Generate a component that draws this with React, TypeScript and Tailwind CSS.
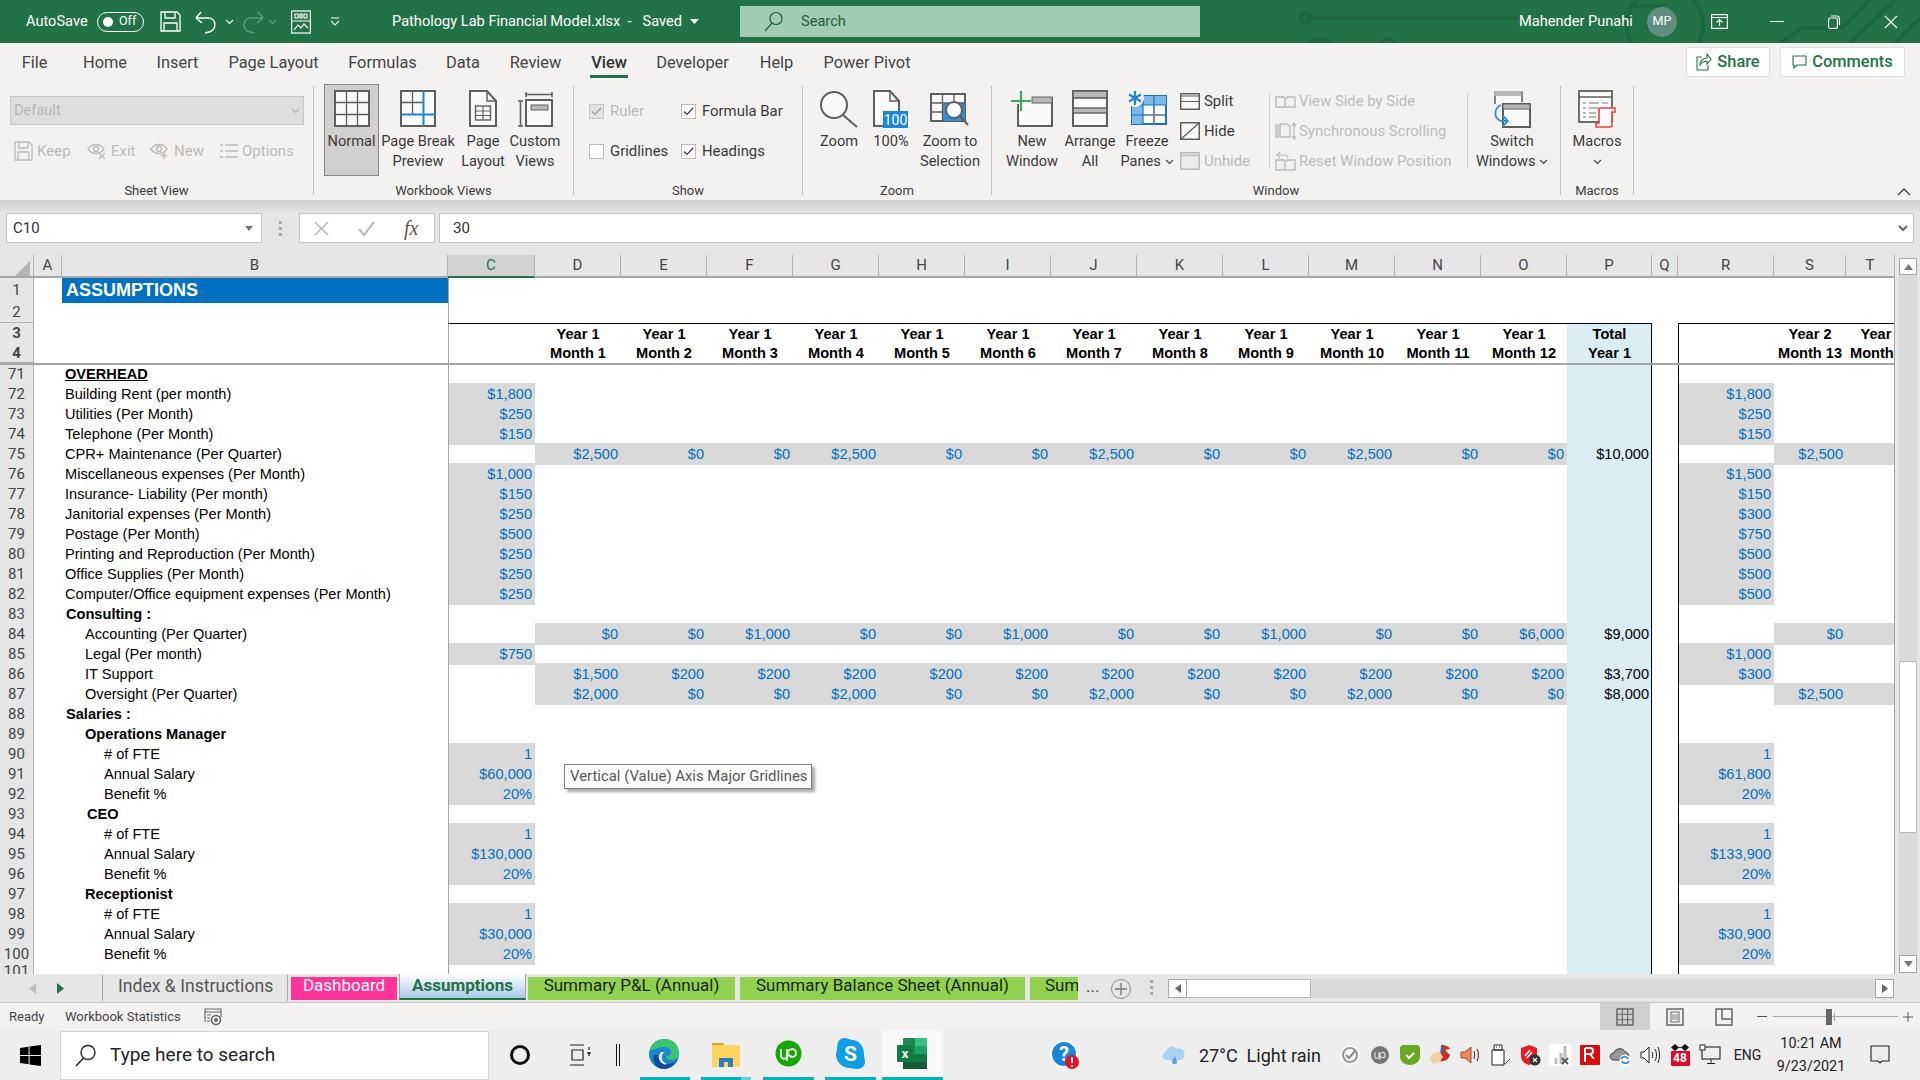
import React from "react";

const ui = "font-['Roboto',sans-serif]";
const cellFont = "font-['Liberation_Sans',Arial,sans-serif]";

/* ---------- small icons ---------- */
const S = "#5e5e5e";
const BIcon = ({ w = 38, h = 38, children }: { w?: number; h?: number; children: React.ReactNode }) => (
  <svg width={w} height={h} viewBox={`0 0 ${w} ${h}`} className="shrink-0">{children}</svg>
);
const NormalI = () => (
  <BIcon w={36} h={38}>
    <rect x="1" y="1" width="34" height="35" fill="#fafafa" stroke={S} strokeWidth="2" />
    <path d="M12.5 1v35M23.5 1v35M1 12.5h34M1 24.5h34" stroke={S} strokeWidth="1.3" fill="none" />
  </BIcon>
);
const PageBreakI = () => (
  <BIcon w={36} h={38}>
    <rect x="1" y="1" width="34" height="35" fill="#fafafa" stroke={S} strokeWidth="2" />
    <path d="M12.5 1v24M1 12.5h23" stroke={S} strokeWidth="1.3" fill="none" />
    <path d="M23.5 1v35M1 24.5h34" stroke="#1a86d6" strokeWidth="2" fill="none" />
  </BIcon>
);
const PageLayoutI = () => (
  <BIcon w={28} h={38}>
    <path d="M1 1h17l9 10v25H1z" fill="#fafafa" stroke={S} strokeWidth="2" />
    <path d="M18 1v10h9" fill="none" stroke={S} strokeWidth="1.5" />
    <rect x="6.5" y="16" width="15" height="14" fill="none" stroke={S} strokeWidth="1.4" />
    <path d="M14 16v14M6.5 21h15M6.5 25.5h15" stroke={S} strokeWidth="1.1" />
  </BIcon>
);
const CustomI = () => (
  <BIcon w={38} h={38}>
    <path d="M2 11h5M4.5 11v25M2 36h5" stroke={S} strokeWidth="1.6" fill="none" />
    <path d="M10 2v5M10 4.5h26M36 2v5" stroke={S} strokeWidth="1.6" fill="none" />
    <rect x="10" y="10" width="26" height="26" fill="#fafafa" stroke={S} strokeWidth="2" />
    <rect x="15" y="15" width="17" height="5" fill="#b8b8b8" stroke={S} strokeWidth="1" />
  </BIcon>
);
const ZoomI = () => (
  <BIcon w={40} h={38}>
    <circle cx="15" cy="15" r="13" fill="#fafafa" stroke={S} strokeWidth="2" />
    <path d="M24 25l14 12" stroke={S} strokeWidth="2" />
  </BIcon>
);
const HundredI = () => (
  <BIcon w={36} h={39}>
    <path d="M1 1h16l9 10v25H1z" fill="#fafafa" stroke={S} strokeWidth="2" />
    <path d="M17 1v10h9" fill="none" stroke={S} strokeWidth="1.5" />
    <rect x="10" y="21" width="25" height="17" fill="#1a86d6" />
    <text x="22.5" y="35" textAnchor="middle" fontSize="14" fill="#fff" fontFamily="Roboto">100</text>
  </BIcon>
);
const ZoomSelI = () => (
  <BIcon w={40} h={38}>
    <rect x="1" y="4" width="34" height="27" fill="#fafafa" stroke={S} strokeWidth="2" />
    <rect x="13" y="13" width="22" height="18" fill="#2f8ed8" />
    <path d="M12.5 4v27M24 4v9M1 13h34M1 22h12" stroke={S} strokeWidth="1.3" fill="none" />
    <circle cx="24" cy="20" r="8" fill="#fff" stroke={S} strokeWidth="2" />
    <path d="M30 26l8 9" stroke={S} strokeWidth="2" />
  </BIcon>
);
const NewWinI = () => (
  <BIcon w={44} h={38}>
    <path d="M8 14v22h34V8H22" fill="#fafafa" stroke={S} strokeWidth="2" />
    <rect x="22" y="7" width="20" height="6" fill="#b8b8b8" stroke={S} strokeWidth="1" />
    <path d="M11 1v20M1 11h20" stroke="#3fa266" strokeWidth="2.2" />
  </BIcon>
);
const ArrangeI = () => (
  <BIcon w={36} h={38}>
    <rect x="1" y="1" width="34" height="35" fill="#fafafa" stroke={S} strokeWidth="2" />
    <rect x="1" y="1" width="34" height="7" fill="#b8b8b8" stroke={S} strokeWidth="1.6" />
    <rect x="1" y="18" width="34" height="5" fill="#b8b8b8" stroke={S} strokeWidth="1.4" />
  </BIcon>
);
const FreezeI = () => (
  <BIcon w={40} h={38}>
    <rect x="5" y="6" width="34" height="28" fill="#fafafa" stroke="#1e71b8" strokeWidth="2" />
    <rect x="5" y="6" width="34" height="9" fill="#7db9e8" />
    <rect x="5" y="6" width="11" height="28" fill="#7db9e8" />
    <path d="M16 6v28M27 6v28M5 15h34M5 25h34" stroke="#1e71b8" strokeWidth="1.2" />
    <path d="M27 15v19M16 25h23" stroke="#777" strokeWidth="1" />
    <circle cx="8" cy="8" r="9" fill="#f3f2f1" />
    <path d="M8 1v14M2 4.5l12 7M14 4.5l-12 7" stroke="#1a86d6" strokeWidth="2.2" />
  </BIcon>
);
const SplitI = () => (
  <BIcon w={20} h={17}>
    <rect x=".75" y=".75" width="18.5" height="15.5" fill="#fafafa" stroke={S} strokeWidth="1.5" />
    <path d="M1 3h18M1 8.5h18" stroke={S} strokeWidth="1.2" />
  </BIcon>
);
const HideI = () => (
  <BIcon w={20} h={18}>
    <rect x=".75" y=".75" width="18.5" height="16.5" fill="#fafafa" stroke={S} strokeWidth="1.5" />
    <path d="M1 17L19 1" stroke={S} strokeWidth="1.3" />
  </BIcon>
);
const UnhideI = () => (
  <BIcon w={20} h={18}>
    <rect x=".75" y=".75" width="18.5" height="16.5" fill="#ecebea" stroke="#bdbbb8" strokeWidth="1.5" />
    <path d="M1 3.5h18" stroke="#bdbbb8" strokeWidth="1.4" />
  </BIcon>
);
const D = "#bdbbb8";
const SideI = () => (
  <BIcon w={21} h={14}>
    <path d="M1 3h8l1 2v8H1zM11 5l1-2h8v10h-10" fill="none" stroke={D} strokeWidth="1.4" />
  </BIcon>
);
const SyncI = () => (
  <BIcon w={22} h={18}>
    <path d="M1 3h2v12H1zM5 2h7l3 3v10H5z" fill="none" stroke={D} strokeWidth="1.4" />
    <path d="M19 1v16M17 4l2-3 2 3M17 14l2 3 2-3" fill="none" stroke={D} strokeWidth="1.2" />
  </BIcon>
);
const ResetI = () => (
  <BIcon w={21} h={20}>
    <path d="M1 9h8l1 2v8H1zM11 11l1-2h8v10h-10" fill="none" stroke={D} strokeWidth="1.4" />
    <path d="M5 1L2 4l3 3M2 4h8c2 0 3 1 3 3" fill="none" stroke={D} strokeWidth="1.2" />
  </BIcon>
);
const SwitchI = () => (
  <BIcon w={38} h={38}>
    <path d="M2 14V2h27v10" fill="#fafafa" stroke={S} strokeWidth="1.5" />
    <rect x="1.5" y="1" width="27" height="5" fill="#b8b8b8" />
    <rect x="10" y="14" width="27" height="23" fill="#fafafa" stroke={S} strokeWidth="2" />
    <rect x="10" y="14" width="27" height="5" fill="#b8b8b8" stroke={S} strokeWidth="1" />
    <path d="M8 15c-7 3-8 13 0 16h6M10 26l5 5-5 5" fill="none" stroke="#2f8ed8" strokeWidth="1.8" />
  </BIcon>
);
const MacrosI = () => (
  <BIcon w={38} h={38}>
    <rect x="1" y="1" width="33" height="31" fill="#fafafa" stroke={S} strokeWidth="1.8" />
    <path d="M1 7h33" stroke={S} strokeWidth="1.4" />
    <path d="M5 13h3M11 13h10M24 13h6M5 18h3M11 18h10M5 23h3M11 23h7M5 27h3M11 27h7" stroke="#777" strokeWidth="1.2" />
    <path d="M22 18h15v4h-3v13c0 2-1 2-2 2H18v-4h3V19z" fill="#fafafa" stroke="#e8403f" strokeWidth="1.6" />
  </BIcon>
);

const Chev = ({ c = "#444" }: { c?: string }) => (
  <svg width="9" height="6" viewBox="0 0 9 6" className="inline-block"><path d="M1 1l3.5 3.5L8 1" fill="none" stroke={c} strokeWidth="1.2" /></svg>
);

const Big = ({ w, icon, lines, active }: { w: string; icon: React.ReactNode; lines: React.ReactNode[]; active?: boolean }) => (
  <div className={`${w} shrink-0 flex flex-col items-center ${active ? "pt-[5px] bg-[#d2d0ce] border border-[#8a8886] h-[92px] -mt-[2px]" : "pt-[4px]"}`}>
    <div className="h-[41px] flex items-start justify-center">{icon}</div>
    {lines.map((l, i) => (
      <div key={i} className="h-[20px] leading-[20px] text-[14.6px] text-[#3b3a39] whitespace-nowrap">{l}</div>
    ))}
  </div>
);

const Sep = ({ h = "h-[109px]" }: { h?: string }) => <div className={`w-px ${h} bg-[#c4c3c1] shrink-0`} />;

const Group = ({ w, label, children }: { w: string; label: string; children: React.ReactNode }) => (
  <div className={`${w} shrink-0 h-[114px] flex flex-col`}>
    <div className="flex-1 flex min-h-0">{children}</div>
    <div className="h-[20px] leading-[21px] text-center text-[13px] text-[#3b3a39]">{label}</div>
  </div>
);

const Check = ({ on, dis }: { on?: boolean; dis?: boolean }) => (
  <span className={`w-[15px] h-[15px] border flex items-center justify-center shrink-0 ${dis ? "border-[#c8c6c4] bg-[#e3e2e0]" : "border-[#bdbbb8] bg-white"}`}>
    {on && <svg width="11" height="9" viewBox="0 0 11 9"><path d="M1 4.5L4 7.5 10 1" fill="none" stroke={dis ? "#a19f9d" : "#333"} strokeWidth="1.2" /></svg>}
  </span>
);

const Disabled = ({ w, icon, t }: { w: string; icon: React.ReactNode; t: string }) => (
  <div className={`flex items-center gap-[4px] shrink-0 ${w}`}>
    {icon}
    <span className="text-[15px] text-[#bdbbb8]">{t}</span>
  </div>
);

const Eye = ({ x }: { x?: boolean }) => (
  <svg width="20" height="18" viewBox="0 0 20 18">
    <path d="M1 7c4-6 12-6 16 0-4 6-12 6-16 0z" fill="none" stroke={D} strokeWidth="1.4" />
    <circle cx="9" cy="7" r="2.5" fill="none" stroke={D} strokeWidth="1.3" />
    {x ? <path d="M12 11l6 6M18 11l-6 6" stroke={D} strokeWidth="1.3" /> : <path d="M14 10v7M11 13.5h6" stroke={D} strokeWidth="1.3" />}
  </svg>
);

const TabItem = ({ t, ml, on }: { t: string; ml: string; on?: boolean }) => (
  <div className={`${ml} shrink-0 h-[37px] flex flex-col items-center`}>
    <div className={`h-[32px] leading-[39px] text-[16.4px] whitespace-nowrap ${on ? "font-medium text-[#323130]" : "text-[#444]"}`}>{t}</div>
    {on && <div className="w-full h-[3px] bg-[#217346]" />}
  </div>
);

/* ---------- sheet data ---------- */
const gridCols = "grid grid-cols-[34px_28px_386px_87px_repeat(12,86px)_85px_26px_96px_72px_49px]";
const headerLetters = ["A", "B", "C", "D", "E", "F", "G", "H", "I", "J", "K", "L", "M", "N", "O", "P", "Q", "R", "S", "T"];

type R = {
  n: number; label?: string; bold?: boolean; under?: boolean; ind?: string;
  c?: string; m?: string[]; p?: string; r?: string; s?: string; sFill?: boolean;
};
const q = (a: string, b: string, c: string, last = "$0") => [a, b, c, a, b, c, a, b, c, a, b, last];

const rows: R[] = [
  { n: 71, label: "OVERHEAD", bold: true, under: true },
  { n: 72, label: "Building Rent (per month)", c: "$1,800", r: "$1,800" },
  { n: 73, label: "Utilities (Per Month)", c: "$250", r: "$250" },
  { n: 74, label: "Telephone (Per Month)", c: "$150", r: "$150" },
  { n: 75, label: "CPR+ Maintenance (Per Quarter)", m: q("$2,500", "$0", "$0"), p: "$10,000", s: "$2,500", sFill: true },
  { n: 76, label: "Miscellaneous expenses (Per Month)", c: "$1,000", r: "$1,500" },
  { n: 77, label: "Insurance- Liability (Per month)", c: "$150", r: "$150" },
  { n: 78, label: "Janitorial expenses (Per Month)", c: "$250", r: "$300" },
  { n: 79, label: "Postage (Per Month)", c: "$500", r: "$750" },
  { n: 80, label: "Printing and Reproduction (Per Month)", c: "$250", r: "$500" },
  { n: 81, label: "Office Supplies (Per Month)", c: "$250", r: "$500" },
  { n: 82, label: "Computer/Office equipment expenses (Per Month)", c: "$250", r: "$500" },
  { n: 83, label: "Consulting :", bold: true, ind: "pl-[4px]" },
  { n: 84, label: "Accounting (Per Quarter)", ind: "pl-[23px]", m: q("$0", "$0", "$1,000", "$6,000"), p: "$9,000", s: "$0", sFill: true },
  { n: 85, label: "Legal (Per month)", ind: "pl-[23px]", c: "$750", r: "$1,000" },
  { n: 86, label: "IT Support", ind: "pl-[23px]", m: ["$1,500", "$200", "$200", "$200", "$200", "$200", "$200", "$200", "$200", "$200", "$200", "$200"], p: "$3,700", r: "$300" },
  { n: 87, label: "Oversight (Per Quarter)", ind: "pl-[23px]", m: q("$2,000", "$0", "$0"), p: "$8,000", s: "$2,500", sFill: true },
  { n: 88, label: "Salaries :", bold: true, ind: "pl-[4px]" },
  { n: 89, label: "Operations Manager", bold: true, ind: "pl-[23px]" },
  { n: 90, label: "# of FTE", ind: "pl-[42px]", c: "1", r: "1" },
  { n: 91, label: "Annual Salary", ind: "pl-[42px]", c: "$60,000", r: "$61,800" },
  { n: 92, label: "Benefit %", ind: "pl-[42px]", c: "20%", r: "20%" },
  { n: 93, label: "CEO", bold: true, ind: "pl-[25px]" },
  { n: 94, label: "# of FTE", ind: "pl-[42px]", c: "1", r: "1" },
  { n: 95, label: "Annual Salary", ind: "pl-[42px]", c: "$130,000", r: "$133,900" },
  { n: 96, label: "Benefit %", ind: "pl-[42px]", c: "20%", r: "20%" },
  { n: 97, label: "Receptionist", bold: true, ind: "pl-[23px]" },
  { n: 98, label: "# of FTE", ind: "pl-[42px]", c: "1", r: "1" },
  { n: 99, label: "Annual Salary", ind: "pl-[42px]", c: "$30,000", r: "$30,900" },
  { n: 100, label: "Benefit %", ind: "pl-[42px]", c: "20%", r: "20%" },
  { n: 101 },
];

const RowHead = ({ n }: { n: number }) => (
  <div className={`${ui} bg-[#e6e6e6] border-r border-b border-[#b1b1b1] flex justify-center text-[15px] text-[#444] leading-none pt-[1px] ${n === 101 ? "items-start" : "items-center"}`}>{n}</div>
);
const num = "text-right pr-[3px] text-[#0070c0] h-full";

const DataRow = ({ r }: { r: R }) => (
  <div className={`${gridCols} ${r.n === 101 ? "h-[11px] overflow-hidden" : "h-[20px]"} ${r.n === 71 ? "border-t-2 border-[#a6a6a6] leading-[19px]" : "leading-[22px]"} ${cellFont} text-[14.6px] text-black`}>
    <RowHead n={r.n} />
    <div />
    <div className={`whitespace-nowrap pl-[3px] ${r.ind ?? ""} ${r.bold ? "font-bold" : ""} ${r.under ? "underline" : ""}`}>{r.label}</div>
    <div className={`border-l border-[#a6a6a6] ${num} ${r.c ? "bg-[#d9d9d9]" : ""}`}>{r.c}</div>
    {Array.from({ length: 12 }).map((_, i) => (
      <div key={i} className={`${num} ${r.m ? "bg-[#d9d9d9]" : ""}`}>{r.m?.[i]}</div>
    ))}
    <div className="bg-[#daedf3] border-r border-black text-right pr-[2px]">{r.p}</div>
    <div />
    <div className={`border-l border-black ${num} ${r.r ? "bg-[#d9d9d9]" : ""}`}>{r.r}</div>
    <div className={`${num} ${r.sFill ? "bg-[#d9d9d9]" : ""}`}>{r.s}</div>
    <div className={r.sFill ? "bg-[#d9d9d9]" : ""} />
  </div>
);

const HeadRow = ({ n, top }: { n: number; top?: boolean }) => {
  const yr = top;
  const bt = top ? "border-t border-t-black" : "";
  return (
    <div className={`${gridCols} h-[20px] ${cellFont} text-[14.6px] leading-[20px] font-bold text-black`}>
      <RowHead n={n} />
      <div />
      <div />
      <div className={`border-l border-l-[#a6a6a6] ${bt}`} />
      {Array.from({ length: 12 }).map((_, i) => (
        <div key={i} className={`text-center whitespace-nowrap ${bt}`}>{yr ? "Year 1" : `Month ${i + 1}`}</div>
      ))}
      <div className={`bg-[#daedf3] border-r border-r-black text-center pl-[1px] ${bt}`}>{yr ? "Total" : "Year 1"}</div>
      <div />
      <div className={`border-l border-l-black ${bt}`} />
      <div className={`text-center whitespace-nowrap ${bt}`}>{yr ? "Year 2" : "Month 13"}</div>
      <div className={`overflow-hidden ${bt}`}><div className="w-[72px] text-center whitespace-nowrap">{yr ? "Year 2" : "Month 14"}</div></div>
    </div>
  );
};

/* ---------- tray & taskbar icons ---------- */
const Tray = ({ children }: { children: React.ReactNode }) => <div className="w-[30px] h-[50px] flex items-center justify-center shrink-0">{children}</div>;
const Ic = ({ children, s = 22 }: { children: React.ReactNode; s?: number }) => <svg width={s} height={s} viewBox="0 0 22 22">{children}</svg>;

const TaskApp = ({ w, ml, bg, children, light }: { w: string; ml: string; bg?: string; children: React.ReactNode; light?: boolean }) => (
  <div className={`${w} ${ml} ${bg ?? ""} h-[50px] flex flex-col shrink-0`}>
    <div className="flex-1 flex items-center justify-center">{children}</div>
    <div className="h-[3px] bg-[#00b1c4] flex justify-end">{light && <div className="w-[10px] h-[3px] bg-[#66d0dc]" />}</div>
  </div>
);

export default function App() {
  return (
    <div className={`${ui} w-[1920px] h-[1080px] overflow-hidden bg-[#e6e6e6] flex flex-col`}>
      {/* Title bar */}
      <div className="relative h-[43px] shrink-0 bg-[#217346] flex items-center text-white overflow-hidden">
        <svg className="absolute left-0 top-0" width="1920" height="43" viewBox="0 0 1920 43" fill="none" stroke="#1d663e" strokeWidth="4">
          <path d="M1306 18h214" /><circle cx="1306" cy="18" r="5" />
          <circle cx="1320" cy="60" r="20" /><circle cx="1388" cy="45" r="6" /><path d="M1394 45h70" />
          <circle cx="1665" cy="25" r="38" /><path d="M1634 6h28l-16 22" />
          <path d="M1780 43l22-15h40l28-28M1850 43l45-43M1895 43l25-25" />
        </svg>
        <span className="relative ml-[26px] text-[14.6px] w-[62px]">AutoSave</span>
        <div className="relative ml-[9px] w-[47px] h-[20px] rounded-full border border-white flex items-center">
          <span className="ml-[5px] w-[10px] h-[10px] rounded-full bg-white" />
          <span className="ml-[6px] text-[12.5px] leading-none">Off</span>
        </div>
        <svg className="relative ml-[16px]" width="21" height="21" viewBox="0 0 21 21" fill="none" stroke="#fff" strokeWidth="1.3">
          <path d="M1 1h16l3 3v16H1zM5 1v6h10V1M4 20v-8h13v8" />
        </svg>
        <svg className="relative ml-[14px]" width="21" height="24" viewBox="0 0 21 24" fill="none" stroke="#fff" strokeWidth="1.5">
          <path d="M1 8h12c9 0 9 12 1 14l-4 1M1 8l5-6M1 8l6 5" />
        </svg>
        <span className="relative ml-[9px] flex"><Chev c="#fff" /></span>
        <svg className="relative ml-[9px]" width="21" height="24" viewBox="0 0 21 24" fill="none" stroke="#5f9c7b" strokeWidth="1.5">
          <path d="M20 8H8C-1 8-1 20 7 22l4 1M20 8l-5-6M20 8l-6 5" />
        </svg>
        <span className="relative ml-[4px] flex"><Chev c="#5f9c7b" /></span>
        <svg className="relative ml-[14px]" width="20" height="24" viewBox="0 0 20 24" fill="none" stroke="#fff" strokeWidth="1.2">
          <rect x=".6" y="1" width="18.8" height="22" /><path d="M1 11h18M4 4h3v4H4zM9 4h2v4H9zM13 4h3v4h-3zM3 20l4-5 3 3 3-4 4 4" />
        </svg>
        <svg className="relative ml-[19px]" width="10" height="10" viewBox="0 0 10 10" fill="none" stroke="#fff" strokeWidth="1.1"><path d="M1 1h8M1 4l4 4 4-4" /></svg>
        <span className="relative ml-[52px] text-[14.6px] w-[296px] whitespace-nowrap">Pathology Lab Financial Model.xlsx&nbsp;&nbsp;-&nbsp;&nbsp;&nbsp;Saved</span>
        <svg className="relative ml-[2px]" width="9" height="5" viewBox="0 0 9 5"><path d="M0 0h9L4.5 5z" fill="#fff" /></svg>
        <div className="relative ml-[41px] w-[460px] h-[31px] bg-[#a0ccb4] flex items-center text-[#1b5f3b]">
          <svg className="ml-[24px]" width="19" height="21" viewBox="0 0 19 21" fill="none" stroke="#1b5f3b" strokeWidth="1.2"><circle cx="12" cy="7.5" r="6" /><path d="M8 12L1 20" /></svg>
          <span className="ml-[18px] text-[14.6px]">Search</span>
        </div>
        <span className="relative ml-[319px] text-[14.6px] w-[115px] whitespace-nowrap">Mahender Punahi</span>
        <div className="relative ml-[13px] w-[30px] h-[30px] rounded-full bg-[#5f8e80] flex items-center justify-center text-[12.5px]">MP</div>
        <svg className="relative ml-[34px]" width="17" height="15" viewBox="0 0 17 15" fill="none" stroke="#fff" strokeWidth="1.2"><rect x=".6" y=".6" width="15.8" height="13.8" /><path d="M1 3.5h15M8.5 12V6M5.5 8.5l3-3 3 3" /></svg>
        <div className="relative ml-[42px] w-[14px] h-px bg-white" />
        <svg className="relative ml-[44px]" width="12" height="14" viewBox="0 0 12 14" fill="none" stroke="#fff" strokeWidth="1.1"><rect x=".6" y="3" width="8.8" height="10.4" rx="1.5" /><path d="M3 1h6c1.5 0 2.4 1 2.4 2.4V10" /></svg>
        <svg className="relative ml-[44px]" width="14" height="14" viewBox="0 0 14 14" stroke="#fff" strokeWidth="1.2"><path d="M1 1l12 12M13 1L1 13" /></svg>
      </div>

      {/* Ribbon */}
      <div className="h-[157px] shrink-0 bg-[#f3f2f1] flex flex-col">
        <div className="h-[37px] flex relative">
          <TabItem t="File" ml="ml-[21px] w-[27px]" />
          <TabItem t="Home" ml="ml-[34px] w-[46px]" />
          <TabItem t="Insert" ml="ml-[28px] w-[43px]" />
          <TabItem t="Page Layout" ml="ml-[28px] w-[93px]" />
          <TabItem t="Formulas" ml="ml-[28px] w-[69px]" />
          <TabItem t="Data" ml="ml-[28px] w-[36px]" />
          <TabItem t="Review" ml="ml-[28px] w-[53px]" />
          <TabItem t="View" ml="ml-[28px] w-[38px]" on />
          <TabItem t="Developer" ml="ml-[26px] w-[77px]" />
          <TabItem t="Help" ml="ml-[28px] w-[35px]" />
          <TabItem t="Power Pivot" ml="ml-[29px] w-[88px]" />
          <div className="ml-[775px] mt-[4px] w-[84px] h-[30px] bg-white border border-[#e1dfdd] rounded-[2px] flex items-center justify-center gap-[5px] text-[#217346] font-medium text-[16.4px]">
            <svg width="16" height="18" viewBox="0 0 16 18" fill="none" stroke="#217346" strokeWidth="1.1"><path d="M6 4H1v13h11v-5M4 12c0-4 3-7 7-7V1l4 5.5L11 11V8c-3 0-5 1-7 4z" /></svg>
            Share
          </div>
          <div className="ml-[10px] mt-[4px] w-[125px] h-[30px] bg-white border border-[#e1dfdd] rounded-[2px] flex items-center justify-center gap-[5px] text-[#217346] font-medium text-[16.4px]">
            <svg width="15" height="15" viewBox="0 0 15 15" fill="none" stroke="#217346" strokeWidth="1.1"><path d="M1 1h13v9H5l-3 3v-3H1z" /></svg>
            Comments
          </div>
        </div>
        <div className="flex-1 flex items-start pt-[6px] relative">
          <Group w="w-[313px]" label="Sheet View">
            <div className="flex flex-col">
              <div className="ml-[10px] mt-[10px] w-[294px] h-[29px] bg-[#dfdedd] border border-[#c8c6c4] flex items-center justify-between px-[3px] text-[14.6px] text-[#b8b6b4]">
                Default <Chev c="#b8b6b4" />
              </div>
              <div className="flex items-center h-[24px] mt-[14px] pl-[14px]">
                <Disabled w="w-[73px]" t="Keep" icon={<svg width="19" height="20" viewBox="0 0 19 20" fill="none" stroke={D} strokeWidth="1.3"><path d="M1 1h14l3 3v15H1zM5 1v6h9V1M4 19v-8h11v8" /></svg>} />
                <Disabled w="w-[63px]" t="Exit" icon={<Eye x />} />
                <Disabled w="w-[69px]" t="New" icon={<Eye />} />
                <Disabled w="w-[80px]" t="Options" icon={<svg width="19" height="16" viewBox="0 0 19 16" stroke={D} strokeWidth="1.4"><path d="M1 2h3M6 2h13M1 8h3M6 8h13M1 14h3M6 14h13" /></svg>} />
              </div>
            </div>
          </Group>
          <Sep />
          <Group w="w-[259px]" label="Workbook Views">
            <div className="flex pl-[10px] pt-[0px]">
              <Big w="w-[55px]" active icon={<NormalI />} lines={["Normal"]} />
              <Big w="w-[78px]" icon={<PageBreakI />} lines={["Page Break", "Preview"]} />
              <Big w="w-[52px]" icon={<PageLayoutI />} lines={["Page", "Layout"]} />
              <Big w="w-[52px]" icon={<CustomI />} lines={["Custom", "Views"]} />
            </div>
          </Group>
          <Sep />
          <Group w="w-[228px]" label="Show">
            <div className="grid grid-cols-[92px_120px] grid-rows-[40px_40px] pl-[15px] pt-[5px] text-[14.9px] text-[#3b3a39]">
              <div className="flex items-center gap-[6px] text-[#bdbbb8]"><Check on dis />Ruler</div>
              <div className="flex items-center gap-[6px]"><Check on />Formula Bar</div>
              <div className="flex items-center gap-[6px]"><Check />Gridlines</div>
              <div className="flex items-center gap-[6px]"><Check on />Headings</div>
            </div>
          </Group>
          <Sep />
          <Group w="w-[188px]" label="Zoom">
            <div className="flex pl-[8px]">
              <Big w="w-[56px]" icon={<ZoomI />} lines={["Zoom"]} />
              <Big w="w-[48px]" icon={<HundredI />} lines={["100%"]} />
              <Big w="w-[70px]" icon={<ZoomSelI />} lines={["Zoom to", "Selection"]} />
            </div>
          </Group>
          <Sep />
          <Group w="w-[568px]" label="Window">
            <div className="flex pl-[10px]">
              <Big w="w-[60px]" icon={<NewWinI />} lines={["New", "Window"]} />
              <Big w="w-[56px]" icon={<ArrangeI />} lines={["Arrange", "All"]} />
              <Big w="w-[58px]" icon={<FreezeI />} lines={["Freeze", <>Panes <Chev /></>]} />
              <div className="w-[89px] ml-[4px] flex flex-col text-[14.9px] text-[#3b3a39]">
                <div className="h-[30px] flex items-center gap-[4px]"><SplitI />Split</div>
                <div className="h-[30px] flex items-center gap-[4px]"><HideI />Hide</div>
                <div className="h-[30px] flex items-center gap-[4px] text-[#bdbbb8]"><UnhideI />Unhide</div>
              </div>
              <div className="w-px h-[75px] mt-[7px] bg-[#d2d0ce]" />
              <div className="w-[197px] pl-[5px] flex flex-col text-[14.9px] text-[#bdbbb8] whitespace-nowrap">
                <div className="h-[30px] flex items-center gap-[3px]"><SideI />View Side by Side</div>
                <div className="h-[30px] flex items-center gap-[2px]"><SyncI />Synchronous Scrolling</div>
                <div className="h-[30px] flex items-center gap-[3px]"><ResetI />Reset Window Position</div>
              </div>
              <div className="w-px h-[75px] mt-[7px] bg-[#d2d0ce]" />
              <Big w="w-[88px]" icon={<SwitchI />} lines={["Switch", <>Windows <Chev /></>]} />
            </div>
          </Group>
          <Sep />
          <Group w="w-[72px]" label="Macros">
            <Big w="w-[72px]" icon={<MacrosI />} lines={["Macros", <Chev />]} />
          </Group>
          <Sep />
          <svg className="ml-[263px] mt-[102px]" width="14" height="8" viewBox="0 0 14 8"><path d="M1 7l6-6 6 6" fill="none" stroke="#444" strokeWidth="1.3" /></svg>
        </div>
      </div>
      <div className="h-[13px] shrink-0 bg-linear-to-b from-[#cfcfcf] to-[#e6e6e6]" />

      {/* Formula bar */}
      <div className="h-[30px] shrink-0 flex items-stretch">
        <div className="ml-[6px] w-[256px] bg-white border border-[#c8c6c4] flex items-center justify-between pl-[6px] pr-[8px] text-[15px] text-[#333]">
          C10 <svg width="8" height="5" viewBox="0 0 8 5"><path d="M0 0h8L4 5z" fill="#777" /></svg>
        </div>
        <div className="w-[37px] flex flex-col items-center justify-center gap-[3px]">
          <i className="w-[3px] h-[3px] bg-[#a8a8a8]" /><i className="w-[3px] h-[3px] bg-[#a8a8a8]" /><i className="w-[3px] h-[3px] bg-[#a8a8a8]" />
        </div>
        <div className="w-[136px] bg-white border border-[#c8c6c4] flex items-center pl-[14px] gap-[29px]">
          <svg width="15" height="15" viewBox="0 0 15 15" stroke="#bdbdbd" strokeWidth="1.7"><path d="M1 1l13 13M14 1L1 14" /></svg>
          <svg width="17" height="15" viewBox="0 0 17 15" fill="none" stroke="#bdbdbd" strokeWidth="2.2"><path d="M1 8l5 6L16 1" /></svg>
          <span className="font-['Liberation_Serif',serif] italic text-[20px] text-[#555]">fx</span>
        </div>
        <div className="ml-[4px] w-[1475px] bg-white border border-[#c8c6c4] flex items-center justify-between pl-[13px] pr-[5px] text-[15px] text-[#333]">
          30 <svg width="10" height="7" viewBox="0 0 10 7"><path d="M1 1l4 4 4-4" fill="none" stroke="#666" strokeWidth="2" /></svg>
        </div>
      </div>
      <div className="h-[12px] shrink-0" />

      {/* Sheet */}
      <div className="h-[719px] shrink-0 flex">
        <div className="w-[1895px] shrink-0 flex flex-col border-r border-[#a6a6a6] relative">
          <div className={`${gridCols} h-[23px] shrink-0 border-b-2 border-[#a6a6a6] text-[15px] text-[#444]`}>
            <div className="flex items-end justify-end pr-[3px] pb-[2px] border-r border-[#b1b1b1]">
              <svg width="15" height="15" viewBox="0 0 15 15"><path d="M15 0v15H0z" fill="#b4b4b4" /></svg>
            </div>
            {headerLetters.map((l) => (
              <div key={l} className={`text-center leading-[21px] border-r border-[#b1b1b1] ${l === "C" ? "bg-[#d2d2d2] text-[#217346] h-[23px] border-b-2 border-b-[#217346]" : ""}`}>{l}</div>
            ))}
          </div>
          <div className="flex-1 min-h-0 overflow-hidden bg-white">
            <div className={`${gridCols} h-[23px] ${cellFont}`}>
              <RowHead n={1} />
              <div />
              <div className="bg-[#0070c0] text-white font-bold text-[18px] leading-[25px] pl-[4px]">ASSUMPTIONS</div>
              <div className="border-l border-[#a6a6a6]" />
            </div>
            <div className={`${gridCols} h-[22px] ${cellFont}`}>
              <RowHead n={2} />
              <div />
              <div />
              <div className="border-l border-[#a6a6a6]" />
            </div>
            <HeadRow n={3} top />
            <HeadRow n={4} />
            {rows.map((r) => <DataRow key={r.n} r={r} />)}
          </div>
          <div className="absolute left-[564px] top-[509px] w-[248px] h-[25px] bg-white border border-[#7f7f7f] shadow-[3px_3px_3px_rgba(0,0,0,0.35)] flex items-center pl-[5px] text-[14.9px] text-[#555] whitespace-nowrap">
            Vertical (Value) Axis Major Gridlines
          </div>
        </div>
        {/* vertical scrollbar */}
        <div className="w-[25px] shrink-0 pl-[4px] pr-[3px] pt-[3px] flex flex-col">
          <div className="h-[17px] bg-white border border-[#a6a6a6] flex items-center justify-center">
            <svg width="9" height="6" viewBox="0 0 9 6"><path d="M4.5 0L9 6H0z" fill="#777" /></svg>
          </div>
          <div className="flex-1 bg-[#d9d9d9] flex flex-col">
            <div className="h-[386px]" />
            <div className="h-[172px] bg-white border border-[#b8b8b8]" />
          </div>
          <div className="h-[18px] mb-[1px] bg-white border border-[#a6a6a6] flex items-center justify-center">
            <svg width="9" height="6" viewBox="0 0 9 6"><path d="M4.5 6L9 0H0z" fill="#777" /></svg>
          </div>
        </div>
      </div>

      {/* Sheet tabs */}
      <div className="h-[29px] shrink-0 flex items-start border-b border-[#c8c6c4] text-[17px] leading-[16px]">
        <div className="w-[103px] h-[26px] flex items-center pl-[29px] border-r border-[#a6a6a6] mt-[1px]">
          <svg width="7" height="11" viewBox="0 0 7 11"><path d="M7 0v11L0 5.5z" fill="#bdbdbd" /></svg>
          <svg className="ml-[21px]" width="7" height="11" viewBox="0 0 7 11"><path d="M0 0v11l7-5.5z" fill="#217346" /></svg>
        </div>
        <div className="w-[185px] pl-[15px] pt-[3px] h-[26px] text-[17.6px] text-[#555] border-r border-[#a6a6a6] mt-[1px] whitespace-nowrap">Index &amp; Instructions</div>
        <div className="ml-[3px] mt-[3px] w-[106px] h-[23px] bg-[#ff3399] text-white text-center">Dashboard</div>
        <div className="ml-[2px] w-[127px] h-[26px] pt-[3px] bg-linear-to-b from-white to-[#a8c9e6] border-x border-b-2 border-x-[#a6a6a6] border-b-[#217346] text-center font-bold text-[#217346]">Assumptions</div>
        <div className="ml-[2px] mt-[3px] w-[207px] h-[23px] bg-[#92d050] text-black/85 text-center whitespace-nowrap">Summary P&amp;L (Annual)</div>
        <div className="ml-[5px] mt-[3px] w-[285px] h-[23px] bg-[#92d050] text-black/85 text-center whitespace-nowrap">Summary Balance Sheet (Annual)</div>
        <div className="ml-[5px] mt-[3px] w-[48px] h-[23px] bg-[#92d050] text-black/85 pl-[15px] overflow-hidden whitespace-nowrap">Sum</div>
        <div className="ml-[8px] mt-[4px] text-[#444]">...</div>
        <div className="ml-[12px] mt-[5px] w-[20px] h-[20px] rounded-full border border-[#8a8a8a] flex items-center justify-center">
          <svg width="12" height="12" viewBox="0 0 12 12" stroke="#777" strokeWidth="1.4"><path d="M6 0v12M0 6h12" /></svg>
        </div>
        <div className="ml-[19px] mt-[6px] flex flex-col gap-[3px]">
          <i className="w-[3px] h-[3px] bg-[#a8a8a8]" /><i className="w-[3px] h-[3px] bg-[#a8a8a8]" /><i className="w-[3px] h-[3px] bg-[#a8a8a8]" />
        </div>
        <div className="ml-[15px] mt-[5px] w-[726px] h-[19px] bg-[#d9d9d9] flex">
          <div className="w-[19px] bg-white border border-[#a6a6a6] flex items-center justify-center"><svg width="6" height="9" viewBox="0 0 6 9"><path d="M6 0v9L0 4.5z" fill="#666" /></svg></div>
          <div className="w-[124px] bg-white border-y border-r border-[#b8b8b8]" />
          <div className="flex-1" />
          <div className="w-[19px] bg-white border border-[#a6a6a6] flex items-center justify-center"><svg width="6" height="9" viewBox="0 0 6 9"><path d="M0 0v9l6-4.5z" fill="#666" /></svg></div>
        </div>
      </div>

      {/* Status bar */}
      <div className="h-[27px] shrink-0 bg-[#f3f2f1] flex items-center text-[13px] text-[#444]">
        <span className="ml-[9px] w-[37px]">Ready</span>
        <span className="ml-[19px] w-[120px] whitespace-nowrap">Workbook Statistics</span>
        <svg className="ml-[19px]" width="18" height="18" viewBox="0 0 18 18" fill="none" stroke="#666" strokeWidth="1.1"><path d="M1 14V1h16v8M1 4h16M3 7h4M3 10h3M3 13h3" /><circle cx="12" cy="12" r="4.5" strokeWidth="1.6" /><circle cx="12" cy="12" r="1.4" fill="#666" /></svg>
        <div className="ml-[1378px] w-[50px] h-[27px] bg-[#d2d0ce] flex items-center justify-center">
          <svg width="18" height="18" viewBox="0 0 18 18" fill="none" stroke="#666" strokeWidth="1.5"><rect x="1" y="1" width="16" height="16" /><path d="M6.3 1v16M11.7 1v16M1 6.3h16M1 11.7h16" strokeWidth="1.1" /></svg>
        </div>
        <div className="w-[50px] flex justify-center">
          <svg width="18" height="18" viewBox="0 0 18 18" fill="none" stroke="#666" strokeWidth="1.5"><rect x="1" y="1" width="16" height="16" /><rect x="5" y="4" width="8" height="10" strokeWidth="1" /><path d="M6 7h6M6 9h6M6 11h6" strokeWidth=".8" /></svg>
        </div>
        <div className="w-[48px] flex justify-center">
          <svg width="18" height="18" viewBox="0 0 18 18" fill="none" stroke="#666" strokeWidth="1.5"><path d="M1 1h16v16H1zM7 1v10h10" /></svg>
        </div>
        <div className="ml-[9px] w-[10px] h-px bg-[#555]" />
        <div className="ml-[6px] w-[125px] h-px bg-[#a8a8a8] flex items-center">
          <div className="ml-[53px] w-[6px] h-[16px] bg-[#666]" />
          <div className="ml-[2px] w-px h-[8px] bg-[#a8a8a8]" />
        </div>
        <svg className="ml-[5px]" width="10" height="10" viewBox="0 0 10 10" stroke="#555"><path d="M5 0v10M0 5h10" /></svg>
      </div>

      {/* Taskbar */}
      <div className="h-[50px] shrink-0 bg-[#eeeeee] flex items-center text-[#222]">
        <div className="w-[60px] flex justify-center">
          <svg width="21" height="21" viewBox="0 0 21 21" fill="#000"><path d="M0 3l8.6-1.3v8.2H0zM9.6 1.5L21 0v9.9H9.6zM0 11h8.6v8.3L0 18zM9.6 11H21v10L9.6 19.4z" /></svg>
        </div>
        <div className="w-[429px] h-[49px] bg-white flex items-center border border-[#d6d6d6]">
          <svg className="ml-[14px]" width="21" height="23" viewBox="0 0 21 23" fill="none" stroke="#222" strokeWidth="1.4"><circle cx="13" cy="8.5" r="7" /><path d="M8.5 14L1 22" /></svg>
          <span className="ml-[14px] text-[19px]">Type here to search</span>
        </div>
        <div className="w-[61px] flex justify-center"><span className="w-[20px] h-[20px] rounded-full border-[3px] border-[#111]" /></div>
        <div className="w-[60px] flex justify-center">
          <svg width="21" height="22" viewBox="0 0 21 22" fill="none" stroke="#222" strokeWidth="1.2"><path d="M0 1h14M0 21h14M2 6h11v10H2zM19 3v3M19 9v3" /><path d="M19 8v2" strokeWidth="3" /></svg>
        </div>
        <div className="w-[15px] flex justify-center gap-[2px]"><i className="w-px h-[22px] bg-[#111]" /><i className="w-px h-[22px] bg-[#111]" /></div>
        <TaskApp w="w-[50px]" ml="ml-[15px]">
          <svg width="32" height="32" viewBox="0 0 32 32" className="-ml-[2px]">
            <circle cx="16" cy="16" r="15" fill="#1e86cf" />
            <path d="M2 13C4 4 12 1 17 1c8 0 14 6 14 14 0 5-4 7-8 7-3 0-5-2-5-4 3 0 5-1 5-4 0-3-3-5-7-5-6 0-12 3-14 4z" fill="#39c46e" />
            <path d="M10 17c0 6 5 9 9 9 4 0 7-1 10-4-3 6-8 9-13 9C9 31 4 25 6 17z" fill="#0c4f96" />
            <path d="M14 14c-3 1-4 5-2 9 2 3 5 4 7 3-3-1-6-4-5-8 0-2 1-3 3-4z" fill="#fff" opacity=".9" />
          </svg>
        </TaskApp>
        <TaskApp w="w-[50px]" ml="ml-[11px]" light>
          <svg width="30" height="28" viewBox="0 0 30 28">
            <path d="M1 3h11l2 3H1z" fill="#dda21d" />
            <rect x="1" y="5" width="28" height="22" rx="1" fill="#fcd462" />
            <path d="M8 27v-9h14v9h-5v-5h-4v5z" fill="#2a7fc6" />
          </svg>
        </TaskApp>
        <TaskApp w="w-[51px]" ml="ml-[12px]">
          <svg width="27" height="27" viewBox="0 0 27 27">
            <circle cx="13.5" cy="13.5" r="13" fill="#14a800" />
            <path d="M6 9v6c0 5 6 5 6 0V9M12 15c1-7 9-8 9-2 0 5-6 5-8 1M12 13v8" fill="none" stroke="#fff" strokeWidth="1.8" />
          </svg>
        </TaskApp>
        <TaskApp w="w-[51px]" ml="ml-[11px]">
          <svg width="29" height="33" viewBox="0 0 29 33">
            <path d="M8 1c4 0 6 2 9 2 7 1 11 7 11 14 0 4 1 6 1 8 0 4-3 7-8 7-3 0-5-1-7-1C6 31 0 25 0 17c0-2 1-3 1-5 0-6 2-11 7-11z" fill="#0f9fe6" />
            <text x="14.5" y="24" textAnchor="middle" fontSize="21" fontWeight="700" fill="#fff" fontFamily="Roboto">S</text>
          </svg>
        </TaskApp>
        <TaskApp w="w-[61px]" ml="ml-[6px]" bg="bg-[#f8f8f8]">
          <svg width="30" height="33" viewBox="0 0 30 33" className="-ml-[2px]">
            <rect x="6" y="1" width="24" height="31" rx="1" fill="#1f8a55" />
            <rect x="18" y="1" width="12" height="8" fill="#33c481" />
            <rect x="18" y="9" width="12" height="8" fill="#21a366" />
            <rect x="6" y="17" width="12" height="8" fill="#107c41" />
            <rect x="18" y="17" width="12" height="8" fill="#107c41" />
            <rect x="6" y="25" width="24" height="7" fill="#185c37" />
            <rect x="0" y="8" width="16" height="17" rx="1" fill="#107c41" />
            <text x="8" y="21" textAnchor="middle" fontSize="13" fontWeight="700" fill="#fff" fontFamily="Roboto">x</text>
          </svg>
        </TaskApp>
        <div className="ml-[102px] w-[40px] flex justify-center">
          <svg width="30" height="32" viewBox="0 0 30 32">
            <circle cx="14" cy="15" r="13" fill="#1a86d6" stroke="#fff" strokeWidth="2" />
            <text x="14" y="22" textAnchor="middle" fontSize="20" fontWeight="700" fill="#fff" fontFamily="Roboto">?</text>
            <circle cx="22" cy="23" r="7" fill="#e81123" />
            <path d="M22 18v6M22 26v2" stroke="#fff" strokeWidth="2" />
          </svg>
        </div>
        <div className="ml-[75px] w-[28px] flex justify-center">
          <svg width="26" height="24" viewBox="0 0 26 24">
            <path d="M6 17c-5 0-6-7-1-8 1-5 8-7 11-3 5-2 9 3 7 8-1 2-2 3-4 3z" fill="#a9d3ee" />
            <path d="M14 13c-2 3-3 4-3 6 0 3 5 3 5 0 0-2-1-3-2-6z" fill="#5aa6dc" />
          </svg>
        </div>
        <span className="ml-[11px] w-[136px] text-[18px] whitespace-nowrap">27°C&nbsp; Light rain</span>
        <Tray><Ic><circle cx="11" cy="11" r="10" fill="#fff" /><circle cx="11" cy="11" r="7" fill="none" stroke="#999" strokeWidth="2.2" /><path d="M7 11l3 3 6-7" fill="none" stroke="#888" strokeWidth="2" /></Ic></Tray>
        <Tray><Ic><circle cx="11" cy="11" r="9" fill="#777" /><path d="M6 8v4c0 3 4 3 4 0V8M10 12c1-4 6-5 6-1s-4 3-5 1M11 11v5" fill="none" stroke="#ddd" strokeWidth="1.2" /></Ic></Tray>
        <Tray><Ic><path d="M3 1h16l2 2v10c0 5-6 8-10 8S1 18 1 13V3z" fill="#6aa922" /><path d="M7 11l3 3 5-5" fill="none" stroke="#fff" strokeWidth="2" /></Ic></Tray>
        <Tray><Ic><path d="M12 1c5 0 8 2 9 4l-5 1 5 5c-1 4-5 7-10 6z" fill="#c9302c" /><path d="M13 1l2 7-4 2z" fill="#2b6cb8" /><path d="M1 16c0-5 5-9 10-8l3 5-4 6-6 1z" fill="#f1d2a8" /></Ic></Tray>
        <Tray><Ic><path d="M2 8h4l6-5v16l-6-5H2z" fill="#ee8a5a" stroke="#a24a23" strokeWidth="1" /><path d="M15 7c1 3 1 5 0 8M18 5c2 4 2 8 0 12" fill="none" stroke="#5a4438" strokeWidth="1.2" /></Ic></Tray>
        <Tray><Ic><path d="M5 1h8v5H5zM3 6h12v15H3z" fill="#fff" stroke="#222" strokeWidth="1" /><path d="M7 3h1M10 3h1" stroke="#222" /><path d="M14 18l2 2 5-5" fill="none" stroke="#555" strokeWidth="1" /></Ic></Tray>
        <Tray><Ic><path d="M2 4l8-3 8 3v8c0 5-4 8-8 9-4-1-8-4-8-9z" fill="#e81b23" /><path d="M6 12l5-6M8 14l5-6" stroke="#fff" strokeWidth="1.6" /><circle cx="16" cy="16" r="5.5" fill="#333" /><path d="M14 14l4 4M18 14l-4 4" stroke="#fff" strokeWidth="1.2" /></Ic></Tray>
        <Tray><Ic><rect width="22" height="22" fill="#fff" /><path d="M7 14v6M12 9v11M16 2v12" stroke="#bbb" strokeWidth="3" /><path d="M13 14l6 6M19 14l-6 6" stroke="#555" strokeWidth="2" /></Ic></Tray>
        <Tray><Ic><rect x="1" y="1" width="20" height="20" rx="1" fill="#dd0a0a" /><path d="M6 4v14M6 4h5c4 0 4 6 0 6H6M11 10l4 5" fill="none" stroke="#fff" strokeWidth="2" /></Ic></Tray>
        <Tray><Ic><path d="M5 16c-5 0-5-7 0-7 1-5 9-6 11-1 5 0 5 8 0 8z" fill="#999" stroke="#333" strokeWidth="1" /><circle cx="16" cy="16" r="5.5" fill="#fff" /><path d="M12 15c1-3 6-3 7 0M20 17c-1 3-6 3-7 0" fill="none" stroke="#1a86d6" strokeWidth="1.6" /></Ic></Tray>
        <Tray><Ic><path d="M2 8h3l5-5v16l-5-5H2z" fill="#fff" stroke="#222" strokeWidth="1" /><path d="M13 8c1 2 1 4 0 6M16 5c2 4 2 8 0 12M19 3c2 5 2 11 0 16" fill="none" stroke="#222" strokeWidth="1" /></Ic></Tray>
        <Tray>
          <div className="w-[20px] flex flex-col items-center">
            <svg width="18" height="7" viewBox="0 0 18 7"><path d="M0 3.5L4 0l4 3.5L4 7zM10 3.5L14 0l4 3.5L14 7z" fill="#111" /><path d="M8 3.5h2" stroke="#111" /></svg>
            <div className="w-[19px] h-[15px] bg-[#dc0a2d] rounded-[1px] text-white text-[12px] font-bold leading-[15px] text-center">48</div>
          </div>
        </Tray>
        <Tray><Ic><rect x="3" y="3" width="18" height="12" fill="none" stroke="#222" strokeWidth="1.1" /><rect x="1" y="1" width="5" height="5" fill="#fff" stroke="#222" /><path d="M12 15v4M8 19.5h8" stroke="#222" /></Ic></Tray>
        <div className="w-[45px] text-center text-[14px]">ENG</div>
        <div className="w-[82px] text-center text-[14.4px] leading-[23px]">
          <div>10:21 AM</div>
          <div>9/23/2021</div>
        </div>
        <div className="w-[55px] flex justify-center">
          <svg width="20" height="20" viewBox="0 0 20 20" fill="none" stroke="#222" strokeWidth="1.1"><path d="M1 1h18v15h-7l-2 2-2-2H1z" /></svg>
        </div>
      </div>
    </div>
  );
}
